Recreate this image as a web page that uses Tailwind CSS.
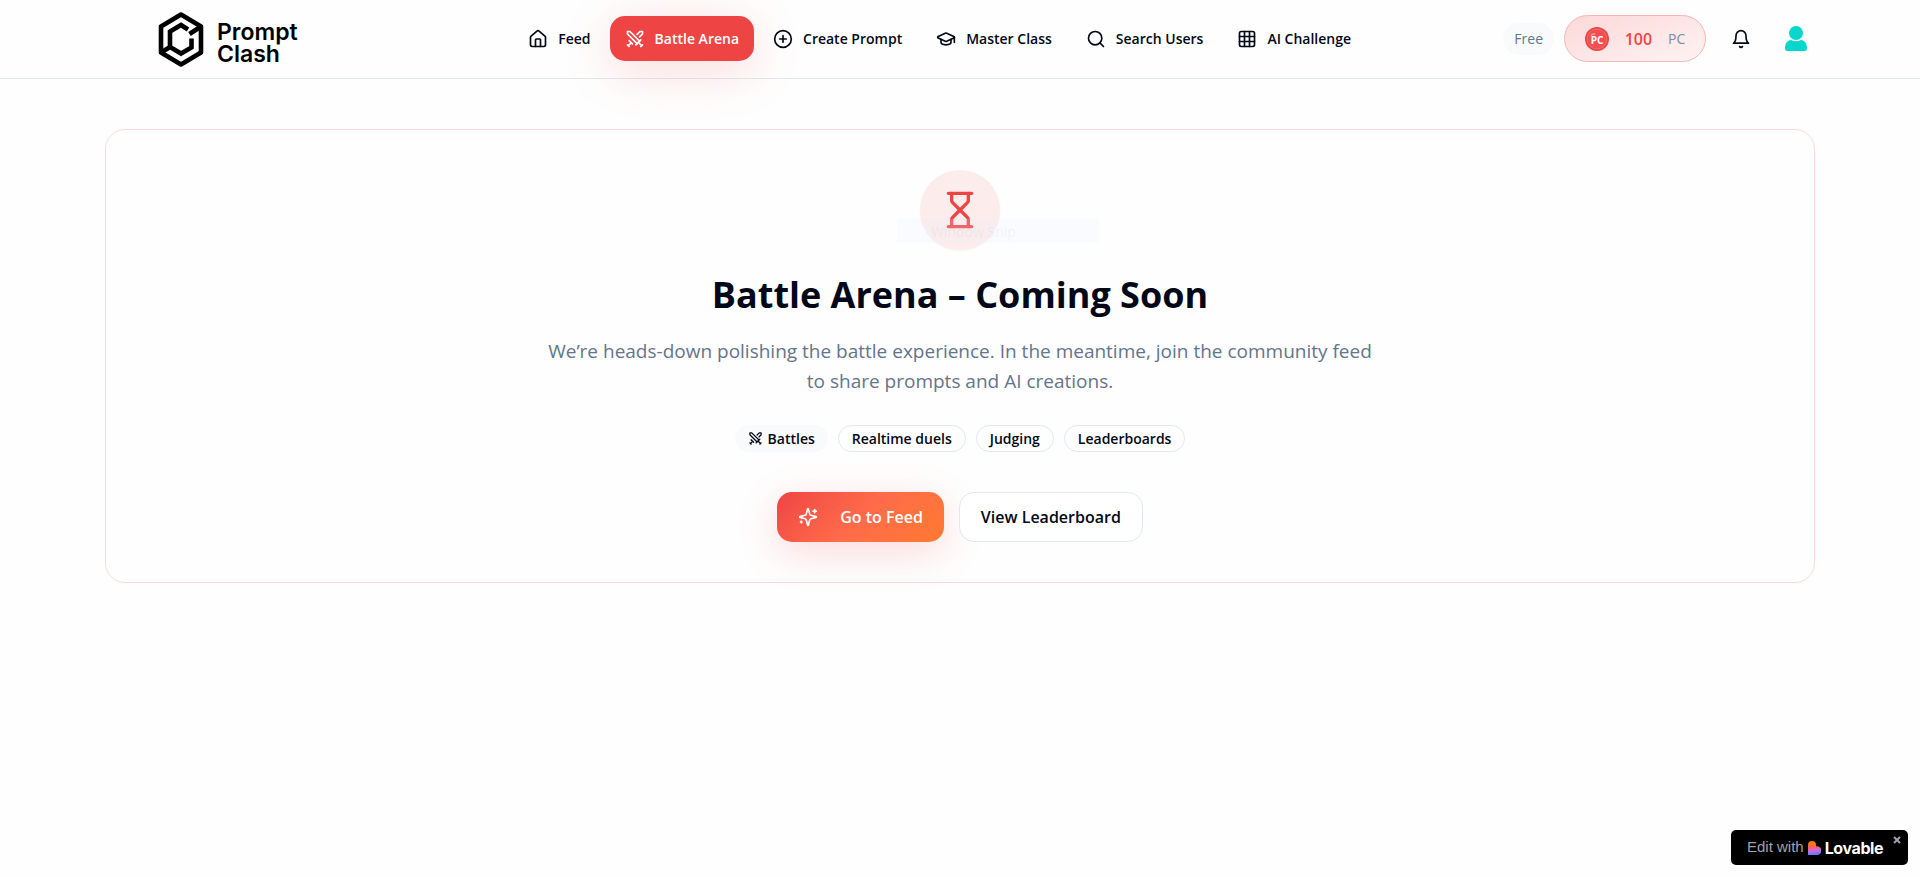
<!DOCTYPE html>
<html lang="en">
<head>
  <meta charset="UTF-8">
  <meta name="viewport" content="width=device-width, initial-scale=1.0">
  <title>Prompt Clash - Battle Arena</title>
  <script src="https://cdn.jsdelivr.net/npm/@tailwindcss/browser@4"></script>
</head>
<body class="min-h-screen bg-[#fefefe] text-[#020817] font-['Open_Sans','Noto_Sans',sans-serif]">

  <!-- Shared icons -->
  <svg class="hidden" aria-hidden="true">
    <symbol id="swords" viewBox="0 0 24 24" fill="none" stroke="currentColor" stroke-width="2" stroke-linecap="round" stroke-linejoin="round">
      <polyline points="14.5 17.5 3 6 3 3 6 3 17.5 14.5"/>
      <line x1="13" x2="19" y1="19" y2="13"/>
      <line x1="16" x2="20" y1="16" y2="20"/>
      <line x1="19" x2="21" y1="21" y2="19"/>
      <polyline points="14.5 6.5 18 3 21 3 21 6 17.5 9.5"/>
      <line x1="5" x2="9" y1="14" y2="18"/>
      <line x1="7" x2="4" y1="17" y2="20"/>
      <line x1="3" x2="5" y1="19" y2="21"/>
    </symbol>
  </svg>

  <!-- Header -->
  <header class="border-b border-[#e2e8f0]">
    <div class="flex items-center justify-between h-[78px] pb-px px-[105px]">
      <a href="#" class="flex items-center gap-3 w-[271px] pt-[3px] pl-[52px]" aria-label="Prompt Clash">
        <svg class="w-12 h-[58px] shrink-0" viewBox="0 0 48 58" fill="none" stroke="#000" stroke-width="4.6" stroke-linejoin="round">
          <path d="M24 3.500 L44 15.500 V41.500 L24 53.500 L4 41.500 V15.500 Z"/>
          <path d="M31 18.500 L24 14 L13 20.500 V36 L24 42.500 L34.500 36.500 V27.500" stroke-linejoin="miter"/>
          <path d="M32.500 23 L44 15.500 M4 41.500 L14 35.500"/>
        </svg>
        <span class="flex flex-col pt-[5px] font-['Inter',sans-serif] font-semibold text-[23px] leading-[22px] text-black">
          <span>Prompt</span>
          <span>Clash</span>
        </span>
      </a>

      <nav class="flex items-center gap-1 text-[14px] font-semibold">
        <a href="#" class="flex items-center gap-[10px] h-[45px] px-[15px]">
          <svg class="size-5" viewBox="0 0 24 24" fill="none" stroke="currentColor" stroke-width="2" stroke-linecap="round" stroke-linejoin="round"><path d="M15 21v-8a1 1 0 0 0-1-1h-4a1 1 0 0 0-1 1v8"/><path d="M3 10a2 2 0 0 1 .709-1.528l7-5.999a2 2 0 0 1 2.582 0l7 5.999A2 2 0 0 1 21 10v9a2 2 0 0 1-2 2H5a2 2 0 0 1-2-2z"/></svg>
          Feed
        </a>
        <a href="#" class="flex items-center gap-[10px] h-[45px] px-[15px] rounded-[15px] bg-[#ef4444] text-white shadow-[0_10px_50px_rgba(239,68,68,0.2)]">
          <svg class="size-5"><use href="#swords"/></svg>
          Battle Arena
        </a>
        <a href="#" class="flex items-center gap-[10px] h-[45px] px-[15px]">
          <svg class="size-5" viewBox="0 0 24 24" fill="none" stroke="currentColor" stroke-width="2" stroke-linecap="round" stroke-linejoin="round"><circle cx="12" cy="12" r="10"/><path d="M8 12h8M12 8v8"/></svg>
          Create Prompt
        </a>
        <a href="#" class="flex items-center gap-[10px] h-[45px] px-[15px]">
          <svg class="size-5" viewBox="0 0 24 24" fill="none" stroke="currentColor" stroke-width="2" stroke-linecap="round" stroke-linejoin="round"><path d="M21.420 10.922a1 1 0 0 0-.019-1.838L12.830 5.180a2 2 0 0 0-1.660 0L2.600 9.080a1 1 0 0 0 0 1.832l8.570 3.908a2 2 0 0 0 1.660 0z"/><path d="M22 10v6"/><path d="M6 12.500V16a6 3 0 0 0 12 0v-3.500"/></svg>
          Master Class
        </a>
        <a href="#" class="flex items-center gap-[10px] h-[45px] px-[15px]">
          <svg class="size-5" viewBox="0 0 24 24" fill="none" stroke="currentColor" stroke-width="2" stroke-linecap="round" stroke-linejoin="round"><circle cx="11" cy="11" r="8"/><path d="m21 21-4.300-4.300"/></svg>
          Search Users
        </a>
        <a href="#" class="flex items-center gap-[10px] h-[45px] px-[15px]">
          <svg class="size-5" viewBox="0 0 24 24" fill="none" stroke="currentColor" stroke-width="2" stroke-linecap="round" stroke-linejoin="round"><rect width="18" height="18" x="3" y="3" rx="2"/><path d="M3 9h18M3 15h18M9 3v18M15 3v18"/></svg>
          AI Challenge
        </a>
      </nav>

      <div class="flex items-center">
        <span class="flex items-center h-8 px-[11px] mr-[10px] rounded-full bg-[#f8fafc] text-[#64748b] text-[14px] font-medium">Free</span>
        <button class="flex items-center justify-center gap-4 w-[142px] h-[47px] rounded-full border border-[#f9b4b4] bg-linear-to-br from-[#fcd8d8] to-[#fef3f3]">
          <svg class="size-6" viewBox="0 0 24 24">
            <circle cx="12" cy="12" r="12" fill="#e84545"/>
            <circle cx="12" cy="12" r="10" fill="#f25050" stroke="#f56a6a"/>
            <path d="M6 8.500q1.500-2 4-1.500" stroke="#f99" stroke-width="1.500" fill="none"/>
            <text x="12" y="17" text-anchor="middle" font-size="10" font-weight="700" fill="#fff">PC</text>
          </svg>
          <span class="text-[16px] font-semibold text-[#ef4444]">100</span>
          <span class="text-[14px] text-[#7f8ba0]">PC</span>
        </button>
        <button class="ml-[25px]" aria-label="Notifications">
          <svg class="size-5" viewBox="0 0 24 24" fill="none" stroke="currentColor" stroke-width="2" stroke-linecap="round" stroke-linejoin="round"><path d="M6 8a6 6 0 0 1 12 0c0 7 3 9 3 9H3s3-2 3-9"/><path d="M10.300 21a1.940 1.940 0 0 0 3.400 0"/></svg>
        </button>
        <button class="flex items-center justify-center size-[38px] ml-[26px]" aria-label="Profile">
          <svg class="w-[22px] h-[25px]" viewBox="0 0 22 25" fill="#06d6cc"><circle cx="11" cy="7" r="7"/><path d="M0 22c0-5 3-8 6-8q5 2.500 10 0c3 0 6 3 6 8q0 3-2 3H2q-2 0-2-3z"/></svg>
        </button>
      </div>
    </div>
  </header>

  <!-- Coming soon -->
  <main class="px-[105px] pt-[50px]">
    <section class="relative flex flex-col items-center px-10 py-10 rounded-[20px] border border-[#fcdada] text-center">
      <div class="flex items-center justify-center size-20 rounded-full bg-[#fdecec] shadow-xs">
        <svg class="size-10 text-[#ef4444]" viewBox="0 0 24 24" fill="none" stroke="currentColor" stroke-width="2" stroke-linecap="round" stroke-linejoin="round"><path d="M5 22h14M5 2h14"/><path d="M17 22v-4.172a2 2 0 0 0-.586-1.414L12 12l-4.414 4.414A2 2 0 0 0 7 17.828V22"/><path d="M7 2v4.172a2 2 0 0 0 .586 1.414L12 12l4.414-4.414A2 2 0 0 0 17 6.172V2"/></svg>
      </div>
      <div class="absolute top-[89px] left-1/2 -ml-[63px] flex items-center w-[202px] h-6 pl-[34px] bg-[#e8f2ff]/20 text-[14px] text-[#64748b]/8">Window Snip</div>

      <h1 class="mt-5 text-[36px] leading-[50px] font-bold">Battle Arena – Coming Soon</h1>
      <p class="mt-4 max-w-[840px] text-[19px] leading-[30px] text-[#64748b]">We’re heads-down polishing the battle experience. In the meantime, join the community feed to share prompts and AI creations.</p>

      <div class="flex flex-wrap justify-center gap-[10px] mt-[29px] text-[14px] font-semibold">
        <span class="flex items-center gap-[5px] h-[27px] px-[13px] rounded-full bg-[#f8fafc]"><svg class="size-[15px]"><use href="#swords"/></svg>Battles</span>
        <span class="flex items-center h-[27px] px-[13px] rounded-full border border-[#e2e8f0]">Realtime duels</span>
        <span class="flex items-center h-[27px] px-[13px] rounded-full border border-[#e2e8f0]">Judging</span>
        <span class="flex items-center h-[27px] px-[13px] rounded-full border border-[#e2e8f0]">Leaderboards</span>
      </div>

      <div class="flex flex-wrap justify-center gap-[15px] mt-10 text-[16px] font-semibold">
        <button class="flex items-center gap-[22px] h-[50px] px-[21px] rounded-[15px] text-white bg-linear-135 from-[#ef4444] via-[#ff6b4a] to-[#ff7a2f] shadow-[0_10px_40px_rgba(239,68,68,0.2)]">
          <svg class="size-5" viewBox="0 0 24 24" fill="none" stroke="currentColor" stroke-width="2" stroke-linecap="round" stroke-linejoin="round"><path d="M9.937 15.500A2 2 0 0 0 8.500 14.063l-6.135-1.582a.5.5 0 0 1 0-.962L8.500 9.936A2 2 0 0 0 9.937 8.500l1.582-6.135a.5.5 0 0 1 .963 0L14.063 8.500A2 2 0 0 0 15.500 9.937l6.135 1.581a.5.5 0 0 1 0 .964L15.500 14.063a2 2 0 0 0-1.437 1.437l-1.582 6.135a.5.5 0 0 1-.963 0z"/><path d="M20 3v4M22 5h-4M4 17v2M5 18H3"/></svg>
          Go to Feed
        </button>
        <button class="h-[50px] px-[21px] rounded-[15px] border border-[#e2e8f0] bg-white">View Leaderboard</button>
      </div>
    </section>
  </main>

  <!-- Lovable badge -->
  <div class="fixed right-3 bottom-3 flex items-center w-[177px] h-[35px] pl-4 rounded-[5px] bg-black font-['Liberation_Sans',Arial,sans-serif]">
    <a href="#" class="flex items-center gap-1 text-[15px] text-[#a1a1aa]">
      Edit with
      <svg class="w-[13px] h-[14px]" viewBox="0 0 13 14">
        <defs><linearGradient id="heart" x1="0.300" y1="0" x2="0.400" y2="1"><stop offset="0.150" stop-color="#ff7a00"/><stop offset="0.500" stop-color="#ff5a7a"/><stop offset="0.700" stop-color="#c86be8"/><stop offset="1" stop-color="#5a7bff"/></linearGradient></defs>
        <path fill="url(#heart)" d="M0 14V4a4 4 0 0 1 8 0v1.200h1a4.300 4.300 0 0 1 0 8.800z"/>
      </svg>
      <span class="font-['Inter',sans-serif] font-bold text-[16px] tracking-tight text-white">Lovable</span>
    </a>
    <button class="absolute top-[6px] right-[7px]" aria-label="Close">
      <svg class="size-2" viewBox="0 0 8 8" stroke="#a1a1aa" stroke-width="2"><path d="M1 1l6 6M7 1L1 7"/></svg>
    </button>
  </div>
</body>
</html>
